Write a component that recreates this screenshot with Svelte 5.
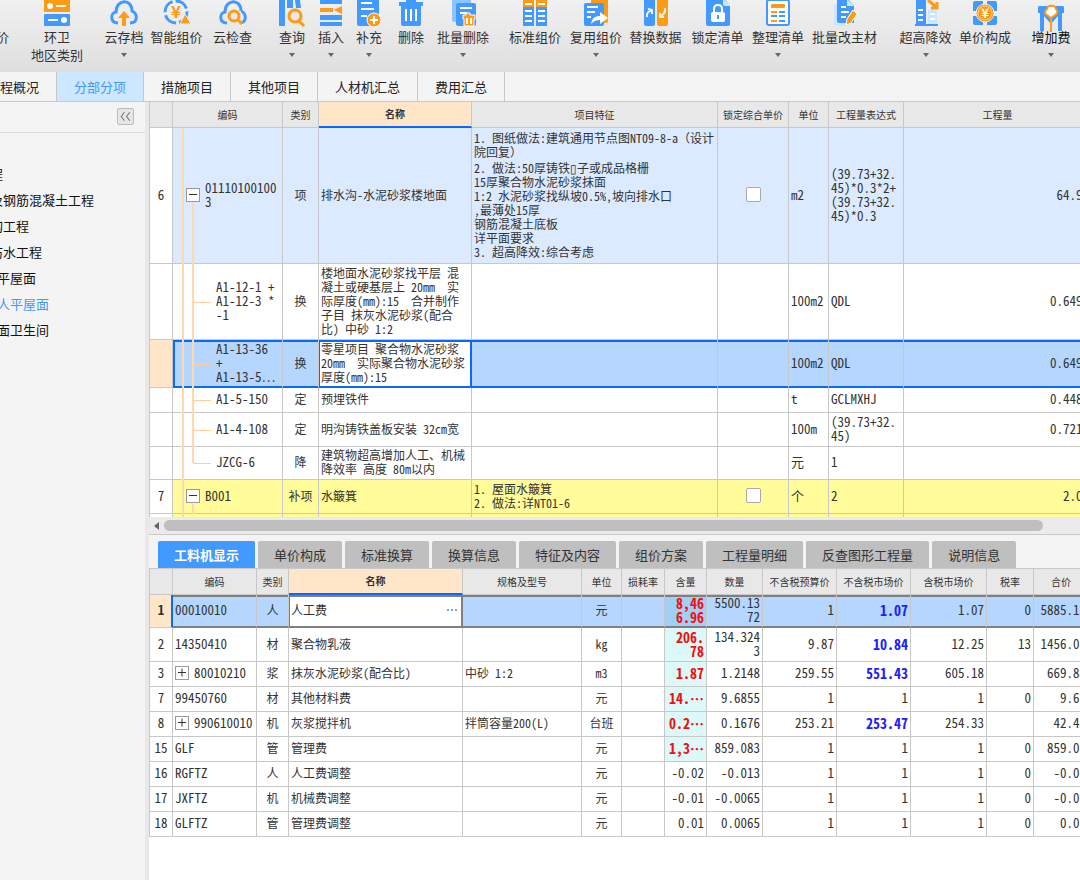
<script>
	const tools = [
		{ label: '价', width: 14, cut: true },
		{ label: '环卫', sub: '地区类别', icon: 'region', width: 86 },
		{ label: '云存档', icon: 'upload', width: 48, menu: true },
		{ label: '智能组价', icon: 'smart', width: 57 },
		{ label: '云检查', icon: 'check', width: 55 },
		{ label: '查询', icon: 'query', width: 40, menu: true, start: true },
		{ label: '插入', icon: 'insert', width: 38, menu: true },
		{ label: '补充', icon: 'add', width: 38, menu: true },
		{ label: '删除', icon: 'trash', width: 46 },
		{ label: '批量删除', icon: 'trashmany', width: 58, menu: true },
		{ label: '标准组价', icon: 'standard', width: 62, start: true },
		{ label: '复用组价', icon: 'reuse', width: 60, menu: true },
		{ label: '替换数据', icon: 'swap', width: 59 },
		{ label: '锁定清单', icon: 'lock', width: 65 },
		{ label: '整理清单', icon: 'tidy', width: 56, menu: true },
		{ label: '批量改主材', icon: 'edit', width: 77 },
		{ label: '超高降效', icon: 'height', width: 61, menu: true, start: true },
		{ label: '单价构成', icon: 'price', width: 58 },
		{ label: '增加费', icon: 'fee', width: 50, menu: true, start: true, dark: true }
	];

	const pages = ['程概况', '分部分项', '措施项目', '其他项目', '人材机汇总', '费用汇总'];

	const sections = [
		{ label: '程' },
		{ label: '及钢筋混凝土工程' },
		{ label: '构工程' },
		{ label: '防水工程' },
		{ label: '平屋面', deep: true },
		{ label: '人平屋面', deep: true, active: true },
		{ label: '面卫生间', deep: true }
	];

	const billCols = [
		{ label: '', width: 24 },
		{ label: '编码', width: 110 },
		{ label: '类别', width: 36 },
		{ label: '名称', width: 153, active: true },
		{ label: '项目特征', width: 246 },
		{ label: '锁定综合单价', width: 71 },
		{ label: '单位', width: 40 },
		{ label: '工程量表达式', width: 75 },
		{ label: '工程量' }
	];

	const bill = [
		{
			no: '6', code: '01110100100\n3', type: '项', name: '排水沟-水泥砂浆楼地面', kind: 'item', height: 136,
			notes: [
				'1. 图纸做法:建筑通用节点图NT09-8-a（设计\n院回复）',
				'2. 做法:50厚铸铁▯子或成品格栅\n15厚聚合物水泥砂浆抹面\n1:2 水泥砂浆找纵坡0.5%,坡向排水口\n,最薄处15厚\n钢筋混凝土底板\n详平面要求\n3. 超高降效:综合考虑'
			],
			lock: true, unit: 'm2', expr: '(39.73+32.\n45)*0.3*2+\n(39.73+32.\n45)*0.3', qty: '64.96'
		},
		{ code: 'A1-12-1 +\nA1-12-3 *\n-1', type: '换', name: '楼地面水泥砂浆找平层 混\n凝土或硬基层上 20mm  实\n际厚度(mm):15  合并制作\n子目 抹灰水泥砂浆(配合\n比) 中砂 1:2', unit: '100m2', expr: 'QDL', qty: '0.6496', height: 76 },
		{ code: 'A1-13-36\n+\nA1-13-5⋯', type: '换', name: '零星项目 聚合物水泥砂浆\n20mm  实际聚合物水泥砂浆\n厚度(mm):15', unit: '100m2', expr: 'QDL', qty: '0.6496', height: 48, kind: 'selected' },
		{ code: 'A1-5-150', type: '定', name: '预埋铁件', unit: 't', expr: 'GCLMXHJ', qty: '0.4482', height: 25 },
		{ code: 'A1-4-108', type: '定', name: '明沟铸铁盖板安装 32cm宽', unit: '100m', expr: '(39.73+32.\n45)', qty: '0.7218', height: 34 },
		{ code: 'JZCG-6', type: '降', name: '建筑物超高增加人工、机械\n降效率 高度 80m以内', unit: '元', expr: '1', qty: '', height: 33, last: true },
		{ no: '7', code: 'B001', type: '补项', name: '水簸箕', notes: ['1. 屋面水簸箕\n2. 做法:详NT01-6'], lock: true, unit: '个', expr: '2', qty: '2.00', height: 34, kind: 'extra' }
	];

	const panels = ['工料机显示', '单价构成', '标准换算', '换算信息', '特征及内容', '组价方案', '工程量明细', '反查图形工程量', '说明信息'];

	const partCols = [
		{ label: '', width: 24 },
		{ label: '编码', width: 84 },
		{ label: '类别', width: 32 },
		{ label: '名称', width: 174, active: true },
		{ label: '规格及型号', width: 119 },
		{ label: '单位', width: 40 },
		{ label: '损耗率', width: 43 },
		{ label: '含量', width: 42 },
		{ label: '数量', width: 56 },
		{ label: '不含税预算价', width: 74 },
		{ label: '不含税市场价', width: 74 },
		{ label: '含税市场价', width: 76 },
		{ label: '税率', width: 47 },
		{ label: '合价' }
	];

	const parts = [
		{ no: 1, code: '00010010', type: '人', name: '人工费', unit: '元', use: '8,46\n6.96', hot: true, qty: '5500.13\n72', base: '1', net: '1.07', set: true, gross: '1.07', tax: '0', total: '5885.15', height: 33 },
		{ no: 2, code: '14350410', type: '材', name: '聚合物乳液', unit: 'kg', use: '206.\n78', hot: true, qty: '134.324\n3', base: '9.87', net: '10.84', set: true, gross: '12.25', tax: '13', total: '1456.08', height: 34 },
		{ no: 3, code: '80010210', open: true, type: '浆', name: '抹灰水泥砂浆(配合比)', spec: '中砂 1:2', unit: 'm3', use: '1.87', hot: true, qty: '1.2148', base: '259.55', net: '551.43', set: true, gross: '605.18', tax: '', total: '669.88', height: 25 },
		{ no: 7, code: '99450760', type: '材', name: '其他材料费', unit: '元', use: '14.…', hot: true, qty: '9.6855', base: '1', net: '1', gross: '1', tax: '0', total: '9.69', height: 25 },
		{ no: 8, code: '990610010', open: true, type: '机', name: '灰浆搅拌机', spec: '拌筒容量200(L)', unit: '台班', use: '0.2…', hot: true, qty: '0.1676', base: '253.21', net: '253.47', set: true, gross: '254.33', tax: '', total: '42.48', height: 25 },
		{ no: 15, code: 'GLF', type: '管', name: '管理费', unit: '元', use: '1,3…', hot: true, qty: '859.083', base: '1', net: '1', gross: '1', tax: '0', total: '859.08', height: 25 },
		{ no: 16, code: 'RGFTZ', type: '人', name: '人工费调整', unit: '元', use: '-0.02', qty: '-0.013', base: '1', net: '1', gross: '1', tax: '0', total: '-0.01', height: 25 },
		{ no: 17, code: 'JXFTZ', type: '机', name: '机械费调整', unit: '元', use: '-0.01', qty: '-0.0065', base: '1', net: '1', gross: '1', tax: '0', total: '-0.01', height: 25 },
		{ no: 18, code: 'GLFTZ', type: '管', name: '管理费调整', unit: '元', use: '0.01', qty: '0.0065', base: '1', net: '1', gross: '1', tax: '0', total: '0.01', height: 25 }
	];

	let page = $state('分部分项');
	let panel = $state('工料机显示');
	let partName = $state('人工费');
</script>

{#snippet toolIcon(name)}
	<svg class="icon" viewBox="0 0 28 28" aria-hidden="true">
		{#if name == 'region'}
			<rect class="o" x="1" y="-3" width="26" height="15" rx="1" />
			<circle class="w" cx="7" cy="6" r="3" /><path class="wl" d="M13 6h10" />
			<rect class="b" x="1" y="14" width="26" height="12" rx="1" />
			<path class="wl" d="M5 20h10" /><circle class="w" cx="21" cy="20" r="3" />
		{:else if name == 'upload' || name == 'check'}
			<path class="bl" d="M8 23C0 23 0 13 6 12C6 -1 22 -2 22 11C28 14 28 23 20 23" />
			{#if name == 'upload'}
				<path class="o" d="M14 11l6 7h-4v8h-4v-8h-4z" />
			{:else}
				<rect class="bg" x="8" y="11" width="14" height="15" />
				<circle class="ol" cx="15" cy="16" r="5" /><path class="ol" d="M19 20l4 4" />
			{/if}
		{:else if name == 'smart'}
			<circle class="bl" cx="13" cy="12" r="11" stroke-dasharray="14 3" />
			<text class="o" x="13" y="18" text-anchor="middle" font-size="17" font-weight="bold">¥</text>
			<path class="o" d="M22 14l6 10h-11z" stroke="#ebebeb" />
		{:else if name == 'query'}
			<path class="b" d="M1 0h6v26h-6zM9 0h6v8h-6zM17 0h5l1 8h-5z" />
			<circle class="bg" cx="17" cy="17" r="9" />
			<circle class="ol" cx="17" cy="16" r="6" /><path class="ol" d="M21 21l5 5" />
		{:else if name == 'insert'}
			<path class="b" d="M3 -1h22v5h-22zM3 15h22v5h-22zM3 22h22v4h-22z" />
			<path class="o" d="M3 8h13v4h-13zM25 6v8l-8-4z" />
		{:else if name == 'add'}
			<rect class="b" x="2" y="-2" width="22" height="28" rx="2" />
			<path class="wl" d="M6 3h11M6 9h13M6 16h6" />
			<circle class="o" cx="19" cy="20" r="7" stroke="#fff" /><path class="wl" d="M15 20h8M19 16v8" />
		{:else if name == 'trash'}
			<path class="b" d="M9 -1h10v3h7v4h-24v-4h7zM4 6h20v18q0 2-2 2h-16q-2 0-2-2z" />
			<path class="wl" d="M9 9v12M14 9v12M19 9v12" />
		{:else if name == 'trashmany'}
			<rect class="l" x="3" y="-2" width="19" height="24" rx="2" />
			<rect class="b" x="7" y="3" width="20" height="23" rx="2" />
			<path class="wl" d="M11 8h12M11 13h7" />
			<path class="o" d="M17 13h4v2h5v4h-1v7h-10v-7h-1v-4h3z" stroke="#fff" /><path class="wl" d="M18 18v6M22 18v6" />
		{:else if name == 'standard'}
			<path class="o" d="M2 -1h11v8h-11zM15 -1h11v8h-11z" />
			<path class="b" d="M2 7h11v19h-11zM15 7h11v19h-11z" />
			<path d="M4 4h7M17 4h7M4 11h7M17 11h7M4 16h7M17 16h7M4 21h7M17 21h7" stroke="#fff" stroke-width="2" />
		{:else if name == 'reuse'}
			<rect class="o" x="9" y="-2" width="17" height="25" rx="2" />
			<rect class="b" x="2" y="3" width="20" height="23" rx="2" />
			<path class="wl" d="M5 7h11M5 12h8M5 17h4" />
			<path class="w" d="M9 24c1-6 4-8 9-8v-4l8 6l-8 6v-4c-4 0-6 1-9 4z" />
		{:else if name == 'swap'}
			<rect class="b" x="2" y="-2" width="11" height="28" rx="2" />
			<rect class="o" x="15" y="-2" width="11" height="28" rx="2" />
			<path class="wl" d="M5 17q-1-4 4-7M6 9l4 1v4M23 8q1 5-4 8M22 17l-4 0v-4" />
		{:else if name == 'lock'}
			<path class="b" d="M4 -2h16l6 8v18q0 2-2 2h-20q-2 0-2-2v-24q0-2 2-2z" />
			<path class="p" d="M19 -2l8 8h-6q-2 0-2-2z" />
			<rect class="w" x="7" y="12" width="14" height="10" rx="2" />
			<path class="wl" d="M10 13v-4q0-4 4-4t4 4v4" /><path d="M14 15v4" stroke="#4299ff" stroke-width="2" />
		{:else if name == 'tidy'}
			<rect x="3" y="0" width="22" height="25" rx="2" fill="#fff" stroke="#4299ff" stroke-width="2" />
			<rect class="o" x="7" y="4" width="14" height="4" rx="1" />
			<path d="M7 12h6M7 21h6" stroke="#ff9a14" stroke-width="2" />
			<path d="M7 16h6M15 12h6M15 16h6M15 21h6" stroke="#4299ff" stroke-width="2" />
		{:else if name == 'edit'}
			<path class="p" d="M3 4h16v22h-14q-2 0-2-2z" />
			<path class="b" d="M8 -2h8l7 8v17h-15q-2 0-2-2v-21q0-2 2-2z" />
			<path class="p" d="M16 -1l7 7h-7z" />
			<path class="wl" d="M10 7h5M10 12h8M10 17h5" />
			<path class="o" d="M22 10l4 4l-6 9l-5 2l1-6z" stroke="#fff" />
		{:else if name == 'height'}
			<path class="b" d="M4 -2h8l2 2v25h-10z" /><path class="p" d="M16 10h9v14h-9z" />
			<path class="wl" d="M6 10h5M6 15h5M6 20h5M18 14h5M18 19h5" />
			<path d="M3 25h23" stroke="#4299ff" stroke-width="2" />
			<path class="ol" d="M16 0l8 7M25 2v6h-6" />
		{:else if name == 'price'}
			<path class="b" d="M4 1h8v10h-10v-8q0-2 2-2zM16 1h8q2 0 2 2v8h-10zM2 16h10v9h-8q-2 0-2-2zM16 16h10v7q0 2-2 2h-8z" />
			<circle class="o" cx="14" cy="13" r="9" stroke="#eee" /><circle cx="14" cy="13" r="7" fill="none" stroke="#ffd08c" />
			<text class="w" x="14" y="18" text-anchor="middle" font-size="13" font-weight="bold">¥</text>
		{:else if name == 'fee'}
			<path class="b" d="M2 6h24q1 0 1 2v5h-2v18h-4v-15l-7 8l-7-8v15h-4v-18h-2v-5q0-2 1-2z" />
			<path d="M14 14v18" stroke="#ff9a14" stroke-width="2" />
			<path class="w" d="M10 9q1-4 4-3q4-1 5 3q3 4-1 6l-4 3l-4-3q-4-2 0-6z" stroke="#ff9a14" stroke-width="2" />
		{/if}
	</svg>
{/snippet}

{#snippet gridHead(cols)}
	<colgroup>
		{#each cols as col}
		<col style:width={col.width ? col.width + 'px' : null} />
		{/each}
	</colgroup>
	<thead>
		<tr>
			{#each cols as col}
			<th class:active={col.active}>{col.label}</th>
			{/each}
		</tr>
	</thead>
{/snippet}

<div class="app">
	<header class="toolbar">
		{#each tools as tool}
		<button class="tool" class:start={tool.start} class:cut={tool.cut} class:dark={tool.dark} style:width="{tool.width}px">
			{@render toolIcon(tool.icon)}
			<span>{tool.label}</span>
			{#if tool.sub}<span>{tool.sub}</span>{/if}
			{#if tool.menu}<i class="caret"></i>{/if}
		</button>
		{/each}
	</header>

	<nav class="pages">
		{#each pages as name, i}
		<button class:active={page == name} class:first={i == 0} onclick={() => (page = name)}>{name}</button>
		{/each}
	</nav>

	<div class="body">
		<aside>
			<div class="aside-head">
				<button class="collapse" aria-label="收起">
					<svg viewBox="0 0 14 14"><path d="M6 3L3 7l3 4M11 3L8 7l3 4" /></svg>
				</button>
			</div>
			<ul>
				{#each sections as section}
				<li class:deep={section.deep} class:active={section.active}>{section.label}</li>
				{/each}
			</ul>
		</aside>

		<main>
			<div class="pane bill">
				<table>
					{@render gridHead(billCols)}
					<tbody>
						{#each bill as row}
						<tr class={row.kind} style:height="{row.height}px">
							<td class="no">{row.no ?? ''}</td>
							<td class="tree" class:child={!row.no} class:last={row.last}>
								<div class="code">
									{#if row.no}<button class="toggle" aria-label="折叠"></button>{/if}
									<span>{row.code}</span>
								</div>
							</td>
							<td class="mid">{row.type}</td>
							<td class="name">{row.name}</td>
							<td>
								{#each row.notes ?? [] as note}
								<p>{#each note.split(/([（）])/) as run}<span class:full={/[（）]/.test(run)}>{run}</span>{/each}</p>
								{/each}
							</td>
							<td class="mid">{#if row.lock}<input type="checkbox" aria-label="锁定综合单价" />{/if}</td>
							<td class="num">{row.unit}</td>
							<td class="num">{row.expr}</td>
							<td class="num right">{row.qty}</td>
						</tr>
						{/each}
						<tr class="extra peek">
							<td class="no"></td>
							<td class="tree"></td>
							{#each billCols.slice(2) as _}<td></td>{/each}
						</tr>
					</tbody>
				</table>
			</div>
			<div class="scroll">
				<i class="arrow"></i>
				<i class="thumb"></i>
			</div>

			<div class="panels">
				{#each panels as name}
				<button class:active={panel == name} onclick={() => (panel = name)}>{name}</button>
				{/each}
			</div>

			<div class="pane parts">
				<table>
					{@render gridHead(partCols)}
					<tbody>
						{#each parts as row, i}
						<tr class:current={i == 0} style:height="{row.height}px">
							<td class="no">{row.no}</td>
							<td class="num">
								<div class="code">
									{#if row.open}<button class="toggle plus" aria-label="展开"></button>{/if}
									<span>{row.code}</span>
								</div>
							</td>
							<td class="mid">{row.type}</td>
							{#if i == 0}
							<td class="edit">
								<div>
									<input type="text" aria-label="名称" bind:value={partName} />
									<button aria-label="选择"><i></i><i></i><i></i></button>
								</div>
							</td>
							{:else}
							<td>{row.name}</td>
							{/if}
							<td>{row.spec ?? ''}</td>
							<td class="mid">{row.unit}</td>
							<td></td>
							<td class="num right" class:hot={row.hot}>{row.use}</td>
							<td class="num right">{row.qty}</td>
							<td class="num right">{row.base}</td>
							<td class="num right" class:set={row.set}>{row.net}</td>
							<td class="num right">{row.gross}</td>
							<td class="num right">{row.tax}</td>
							<td class="num right">{row.total}</td>
						</tr>
						{/each}
					</tbody>
				</table>
			</div>
		</main>
	</div>
</div>

<style>
	:global(body) {
		overflow: hidden;
	}
	.app {
		display: flex;
		flex-direction: column;
		min-height: 100vh;
		overflow: hidden;
		background: #fff;
		color: #333;
		font-family: "Noto Sans CJK SC", sans-serif;
		font-size: 13px;
	}
	button {
		margin: 0;
		padding: 0;
		border: 0;
		background: none;
		color: inherit;
		font: inherit;
		white-space: nowrap;
	}
	.toolbar {
		display: flex;
		height: 71px;
		background: linear-gradient(#f0f0f0, #dfdfdf);
	}
	.tool {
		display: flex;
		flex: none;
		flex-direction: column;
		align-items: center;
		line-height: 18px;
	}
	.tool.start {
		margin-left: 12px;
	}
	.tool.cut {
		align-items: flex-end;
		padding-right: 5px;
	}
	.tool.dark {
		color: #111;
	}
	.icon {
		flex: none;
		width: 28px;
		height: 28px;
		overflow: visible;
	}
	.b { fill: #4299ff; }
	.o { fill: #ff9a14; }
	.w { fill: #fff; }
	.l { fill: #8cc4ff; }
	.p { fill: #cbe6ff; }
	.bg { fill: #e9e9e9; }
	.bl, .ol, .wl {
		fill: none;
		stroke: #4299ff;
		stroke-width: 3;
	}
	.ol { stroke: #ff9a14; }
	.wl {
		stroke: #fff;
		stroke-width: 2;
	}
	.caret {
		margin-top: 7px;
		border: 3px solid transparent;
		border-top: 4px solid #666;
		border-bottom: 0;
	}
	.pages {
		display: flex;
		height: 29px;
		border-top: 1px solid #dcdcdc;
		background: #f4f4f4;
		color: #222;
	}
	.pages button {
		padding: 0 17px;
		border-right: 1px solid #c8c8c8;
	}
	.pages .first {
		padding-left: 0;
	}
	.pages .active {
		background: #cce7ff;
		color: #4299ff;
	}
	.body {
		display: flex;
		flex: 1;
		border-top: 1px solid #c8c8c8;
	}
	aside {
		flex: none;
		box-sizing: border-box;
		width: 149px;
		overflow: hidden;
		border-right: 4px solid #e8e8e8;
		background: #f4f4f4;
		color: #111;
	}
	.aside-head {
		display: flex;
		justify-content: flex-end;
		padding: 6px 11px 7px 0;
		border-bottom: 1px solid #ddd;
	}
	.collapse {
		display: flex;
		width: 17px;
		height: 17px;
		border: 1px solid #bbb;
		border-radius: 2px;
		background: #e6e6e6;
	}
	.collapse path {
		fill: none;
		stroke: #777;
	}
	ul {
		margin: 0;
		padding: 28px 0 0;
		list-style: none;
		white-space: nowrap;
		line-height: 26px;
	}
	li {
		margin-left: -10px;
	}
	li.deep {
		margin-left: -3px;
	}
	li.active {
		color: #4299ff;
	}
	main {
		flex: 1;
		min-width: 0;
	}
	.pane {
		overflow: hidden;
	}
	table {
		width: 100%;
		min-width: 943px;
		table-layout: fixed;
		border-spacing: 0;
		font-size: 12px;
		line-height: 14px;
	}
	.parts table {
		min-width: 940px;
	}
	th {
		box-sizing: border-box;
		height: 26px;
		padding: 0;
		border-right: 1px solid #c8c8c8;
		border-bottom: 1px solid #c8c8c8;
		background: #e8e8e8;
		font-size: 10px;
		font-weight: normal;
		white-space: nowrap;
	}
	th.active {
		border-bottom: 2px solid #0a68ff;
		background: #ffe6c8;
		font-weight: bold;
	}
	th:first-child, td:first-child {
		border-left: 1px solid #c8c8c8;
	}
	td {
		box-sizing: border-box;
		padding: 0 2px 2px;
		border-right: 1px solid #c8c8c8;
		border-bottom: 1px solid #c8c8c8;
		font-feature-settings: "hwid";
		white-space: pre;
	}
	p {
		margin: 0;
	}
	p + p {
		margin-top: 2px;
	}
	.full {
		font-feature-settings: normal;
	}
	.num, .code, .no {
		font-size: 13px;
	}
	.right {
		text-align: right;
	}
	.mid, .no {
		padding: 0 0 2px;
		text-align: center;
	}
	.code {
		display: flex;
		align-items: center;
		gap: 5px;
	}
	.item td:not(.no) {
		background: #dceaff;
	}
	.extra td:not(.no) {
		background: #fffc99;
	}
	.peek {
		height: 3px;
	}
	.peek td {
		height: 3px;
		border-bottom: 0;
	}
	/* guide lines of the tree column */
	.tree {
		position: relative;
		padding-left: 13px;
	}
	.tree::before, .tree::after {
		content: "";
		position: absolute;
		top: 0;
		bottom: -1px;
		left: 9px;
		border-left: 2px solid #ffd9ae;
	}
	.tree::after {
		top: calc(50% + 7px);
		left: 19px;
	}
	.child {
		padding-left: 43px;
	}
	.child::after {
		top: 0;
	}
	.child.last::after {
		bottom: 50%;
	}
	.child .code::before {
		content: "";
		position: absolute;
		top: 50%;
		left: 20px;
		width: 18px;
		border-top: 1px solid #ffcf9a;
	}
	.toggle {
		position: relative;
		flex: none;
		width: 14px;
		height: 14px;
		border: 1px solid #999;
		background: #fff;
	}
	.toggle::before, .plus::after {
		content: "";
		position: absolute;
		top: 5px;
		left: 2px;
		width: 8px;
		border-top: 1px solid #333;
	}
	.plus::after {
		transform: rotate(90deg);
	}
	.selected td {
		border-bottom-color: #0a68ff;
		background: #b4d6ff;
		box-shadow: inset 0 2px #0a68ff, inset 0 -1px #0a68ff;
	}
	.selected td.no {
		border-bottom-color: #c8c8c8;
		background: #ffe6c8;
		box-shadow: none;
	}
	.selected td.tree {
		box-shadow: inset 2px 0 #0a68ff, inset 0 2px #0a68ff, inset 0 -1px #0a68ff;
	}
	.selected td.name {
		border-right-color: #0a68ff;
		background: #fff;
		box-shadow: inset 1px 0 #0a68ff, inset -1px 0 #0a68ff, inset 0 2px #0a68ff, inset 0 -1px #0a68ff;
	}
	input[type="checkbox"] {
		display: block;
		width: 15px;
		height: 15px;
		margin: 0 auto;
		border: 1px solid #aaa;
		border-radius: 2px;
		background: #fff;
		appearance: none;
	}
	.scroll {
		display: flex;
		align-items: center;
		box-sizing: border-box;
		height: 18px;
		padding-left: 5px;
		border-bottom: 1px solid #c8c8c8;
		background: #ebebeb;
	}
	.arrow {
		border: 4px solid transparent;
		border-right: 5px solid #666;
		border-left: 0;
	}
	.thumb {
		flex: 1;
		height: 11px;
		margin: 0 37px 0 5px;
		border-radius: 6px;
		background: #bfbfbf;
	}
	.panels {
		display: flex;
		gap: 3px;
		padding: 6px 9px 0;
		border-bottom: 1px solid #c8c8c8;
		background: #f4f4f4;
	}
	.panels button {
		height: 27px;
		padding: 0 16px;
		border-radius: 2px 2px 0 0;
		background: #bfbfbf;
	}
	.panels .active {
		background: #4299ff;
		color: #fff;
		font-weight: bold;
	}
	.hot {
		background: #dcf8f8;
		color: #f01010;
	}
	.set {
		color: #2020ff;
	}
	.hot, .set {
		font-size: 14px;
		font-weight: bold;
	}
	.current td {
		border-bottom: 2px solid #808080;
		background: #b4d6ff;
		box-shadow: inset 0 2px #808080;
	}
	.current .no {
		border-right-color: #0a68ff;
		border-bottom: 1px solid #c8c8c8;
		background: #ffe6c8;
		box-shadow: inset -1px 0 #0a68ff;
		font-weight: bold;
	}
	.current .hot {
		background: #a0d0f8;
	}
	.current .edit {
		border-right-color: #808080;
		background: #fff;
		box-shadow: inset 1px 2px #808080, inset -1px 0 #808080;
	}
	.edit div {
		display: flex;
		align-items: center;
	}
	.edit input {
		flex: 1;
		min-width: 0;
		padding: 0;
		border: 0;
		outline: 0;
		background: none;
		color: inherit;
		font: inherit;
	}
	.edit button {
		display: flex;
		gap: 2px;
		padding: 4px 3px;
	}
	.edit i {
		width: 2px;
		height: 2px;
		background: #69a9e0;
	}
</style>
